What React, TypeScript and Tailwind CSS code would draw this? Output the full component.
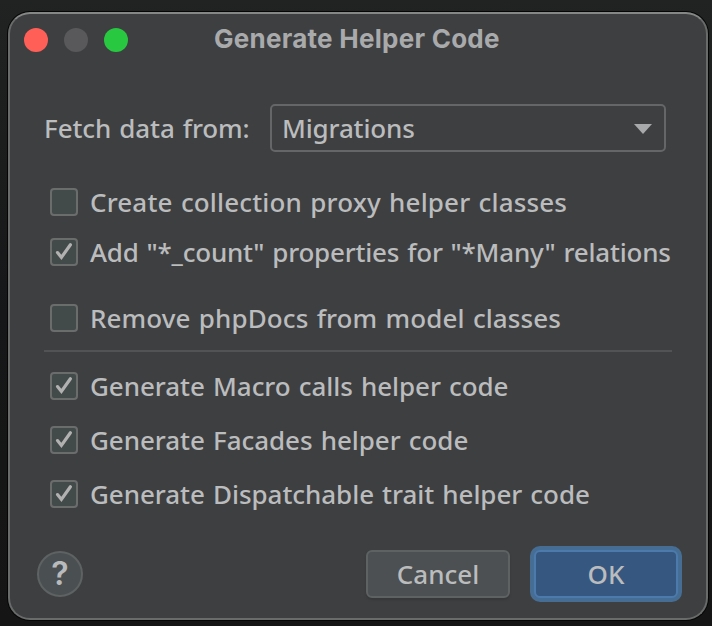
type OptionProps = {
  label: string;
  checked?: boolean;
  className?: string;
};

function Option({ label, checked = false, className = "" }: OptionProps) {
  return (
    <label className={`flex h-7 items-center gap-3 whitespace-nowrap [word-spacing:1.4px] ${className}`}>
      <span className="flex size-7 shrink-0 items-center justify-center rounded-[4px] border-2 border-[#6b6d6d] bg-[#434a4a]">
        {checked && (
          <svg viewBox="0 0 24 24" className="size-6 shrink-0" fill="none" stroke="#b1b1b1" strokeWidth="3.2" strokeLinecap="round">
            <path d="M5.5 12.6 9.4 17.4 18.4 4.8" />
          </svg>
        )}
      </span>
      <span className="leading-7">{label}</span>
    </label>
  );
}

function TitleBar() {
  return (
    <header className="flex h-[52px] items-center pl-[14px]">
      <div className="flex gap-4">
        <span className="size-6 rounded-full bg-[#ff5f57]" />
        <span className="size-6 rounded-full bg-[#59595b]" />
        <span className="size-6 rounded-full bg-[#28c840]" />
      </div>
      <h1 className="mb-0.5 ml-[86px] whitespace-nowrap font-['Inter',sans-serif] text-[26px] leading-8 font-bold tracking-[0.26px] text-[#a9aaab]">
        Generate Helper Code
      </h1>
    </header>
  );
}

export default function App() {
  return (
    <div className="h-[626px] w-[712px] bg-linear-to-b from-[#212322] via-[#161718] to-[#151515] pt-3 pl-2 font-['Noto_Sans',sans-serif] text-[26px] font-medium text-[#bbbcbd]">
      <main className="flex h-[608px] w-[700px] flex-col rounded-[22px] border-2 border-[#696b6b] border-t-[#858786] bg-[#3e3f41] shadow-[0_0_0_1px_#050505]">
        <TitleBar />

        <div className="mt-[38px] flex h-12 items-center pl-[34px]">
          <span className="w-[226px] tracking-[-0.1px] whitespace-nowrap [word-spacing:1.4px]">Fetch data from:</span>
          <button className="flex h-12 w-[396px] items-center justify-between rounded-[5px] border-2 border-[#646668] pr-3 pl-[10px]">
            <span className="tracking-[-0.15px]">Migrations</span>
            <svg viewBox="0 0 18 10" className="mt-0.5 h-[10px] w-[18px]" fill="#a7a9ab">
              <path d="M0 0h18L9 10z" />
            </svg>
          </button>
        </div>

        <div className="mt-9 flex flex-col pl-10">
          <Option label="Create collection proxy helper classes" className="tracking-[0.15px]" />
          <Option
            label='Add "*_count" properties for "*Many" relations'
            checked
            className="mt-[22px] tracking-[-0.21px]"
          />
          <Option label="Remove phpDocs from model classes" className="mt-[38px] tracking-[0.1px]" />
        </div>

        <hr className="mt-[18px] ml-[34px] w-[628px] border-t-2 border-[#515355]" />

        <div className="mt-5 flex flex-col gap-[26px] pl-10 tracking-[-0.05px]">
          <Option label="Generate Macro calls helper code" checked />
          <Option label="Generate Facades helper code" checked />
          <Option label="Generate Dispatchable trait helper code" checked />
        </div>

        <footer className="mt-[38px] flex h-14 items-center pl-[27px]">
          <button className="flex size-[46px] items-center justify-center rounded-full border-2 border-[#5e6263] bg-[#4a4f51] font-['Inter',sans-serif] text-[32px] leading-none font-semibold text-[#b8babc]">
            ?
          </button>
          <button className="ml-[283px] h-12 w-36 rounded-[6px] border-2 border-[#5e6263] bg-[#4c5052] shadow-[0_2px_2px_#37383a]">
            Cancel
          </button>
          <button className="ml-5 h-14 w-[152px] rounded-[10px] border-4 border-[#466d94] bg-[#466d94]">
            <span className="flex h-12 items-center justify-center rounded-[6px] border-2 border-[#4d7aac] bg-[#365880]">
              OK
            </span>
          </button>
        </footer>
      </main>
    </div>
  );
}
